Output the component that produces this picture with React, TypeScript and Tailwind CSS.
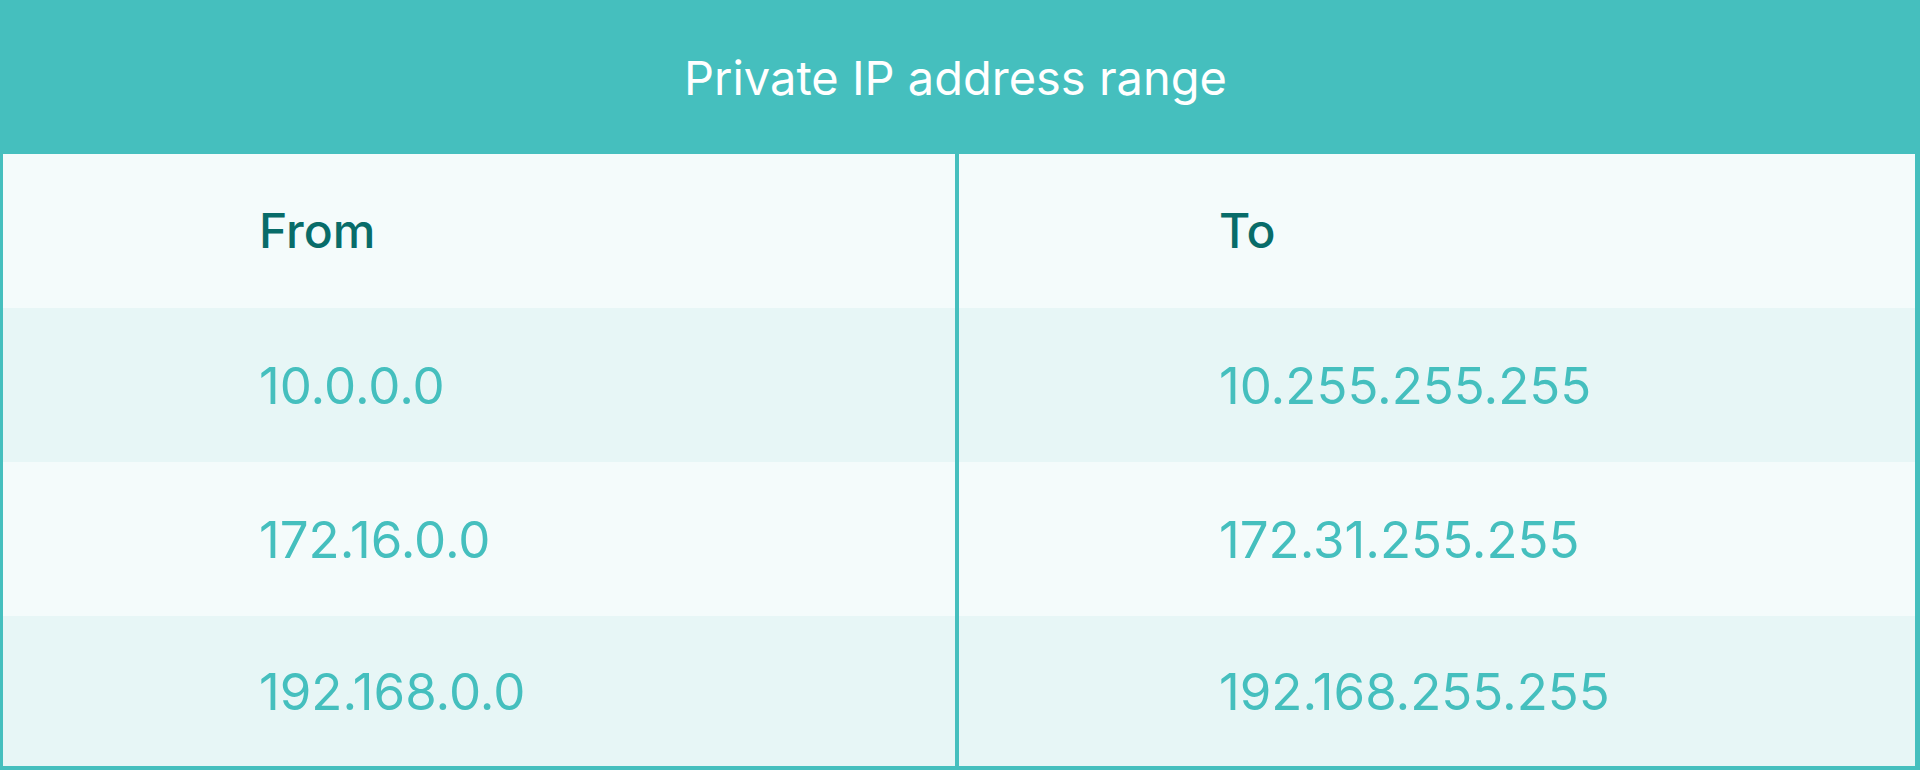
const rows = [
  ["10.0.0.0", "10.255.255.255"],
  ["172.16.0.0", "172.31.255.255"],
  ["192.168.0.0", "192.168.255.255"],
];

export default function App() {
  return (
    <div className="w-[1920px] h-[770px] bg-[#45bfbe] font-['Inter',sans-serif] flex flex-col overflow-hidden">
      <div className="h-[154px] shrink-0 flex items-center pl-[684px] text-white text-[47px] leading-none">
        Private IP address range
      </div>
      <div className="flex-1 flex flex-col pl-[3px] pr-[5px] pb-[4px]">
        <div className="h-[154px] shrink-0 grid grid-cols-[952px_1fr] gap-x-[4px]">
          <div className="bg-[#f4fbfb] flex items-center pl-[256px] text-[#086c69] text-[48px] font-medium leading-none">
            From
          </div>
          <div className="bg-[#f4fbfb] flex items-center pl-[260px] text-[#086c69] text-[48px] font-medium leading-none">
            To
          </div>
        </div>
        {rows.map((r, i) => (
          <div
            key={r[0]}
            className={
              i === 2
                ? "h-[150px] shrink-0 grid grid-cols-[952px_1fr] gap-x-[4px]"
                : "h-[154px] shrink-0 grid grid-cols-[952px_1fr] gap-x-[4px]"
            }
          >
            <div
              className={
                (i % 2 === 0 ? "bg-[#e7f6f6]" : "bg-[#f4fbfb]") +
                " flex items-center pl-[256px] text-[#45bfbe] text-[51px] leading-none"
              }
            >
              {r[0]}
            </div>
            <div
              className={
                (i % 2 === 0 ? "bg-[#e7f6f6]" : "bg-[#f4fbfb]") +
                " flex items-center pl-[260px] text-[#45bfbe] text-[51px] leading-none"
              }
            >
              {r[1]}
            </div>
          </div>
        ))}
      </div>
    </div>
  );
}
